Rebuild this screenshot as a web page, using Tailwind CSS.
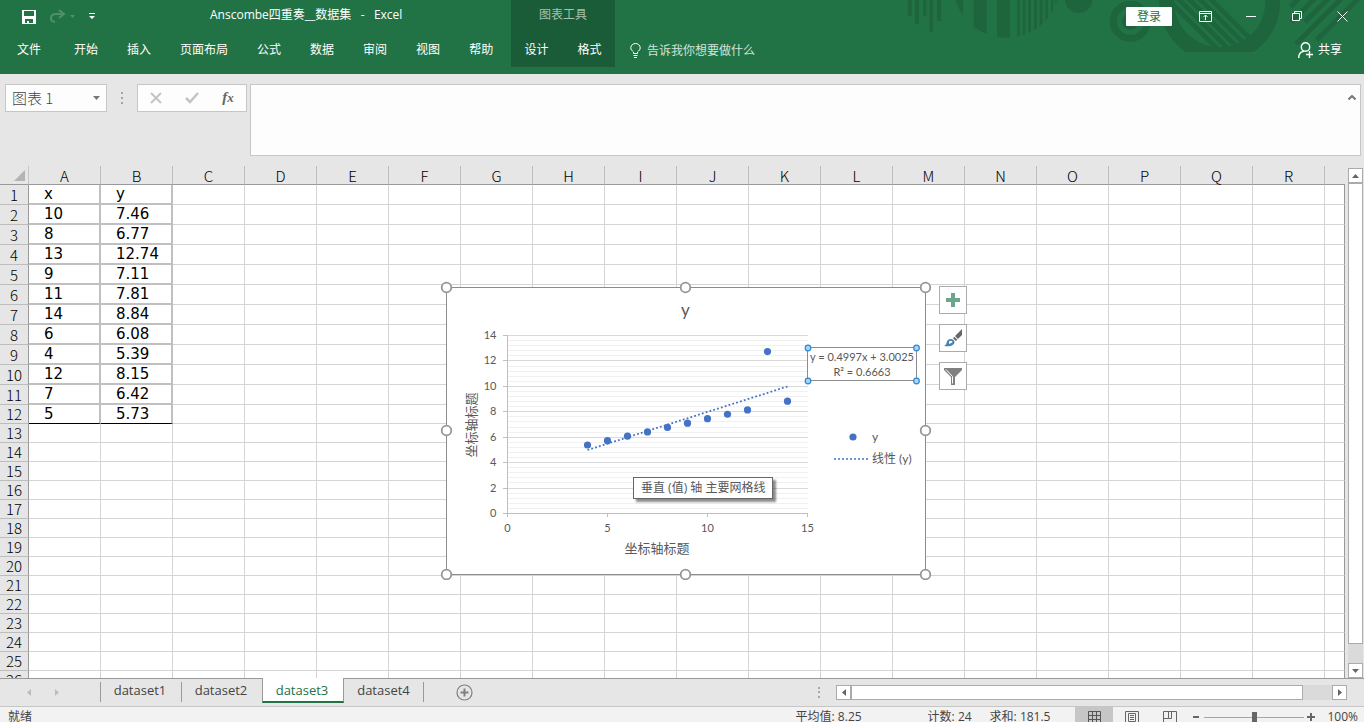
<!DOCTYPE html>
<html lang="zh-CN">
<head>
<meta charset="utf-8">
<title>Anscombe四重奏__数据集 - Excel</title>
<script src="https://cdn.jsdelivr.net/npm/@tailwindcss/browser@4"></script>
</head>
<body class="flex h-screen flex-col overflow-hidden bg-[#e6e6e6] font-['Open_Sans','Noto_Sans_CJK_SC',sans-serif] text-xs text-[#444]">

<header class="relative flex h-[74px] shrink-0 bg-[#217346] text-white">
  <svg class="absolute top-0 right-0 h-[74px] w-[464px]" viewBox="0 0 1392 222" fill="#1e643d" stroke="none" aria-hidden="true">
    <defs>
      <clipPath id="disc"><circle cx="319" cy="-46" r="159"/></clipPath>
      <clipPath id="inner"><circle cx="959" cy="5" r="137"/></clipPath>
      <clipPath id="cut"><rect x="700" y="0" width="500" height="156"/></clipPath>
    </defs>
    <path d="M24 0h11v48H24zM45 0h12v72H45zM69 0h10v49H69zM88 0h11v97H88zM111 0h12v62h-12z"/>
    <path clip-path="url(#disc)" d="M160 0h29v120h-29zM221 0h39v120h-39zM291 0h39v120h-39zM351 0h9v120h-9zM368 0h8v120h-8zM385 0h8v120h-8zM402 0h9v120h-9zM419 0h9v120h-9zM436 0h8v120h-8zM453 0h7v120h-7zM466 0h6v120h-6z"/>
    <circle cx="536" cy="-2" r="41"/>
    <circle cx="691" cy="64" r="51" fill="none" stroke="#1e643d" stroke-width="21"/>
    <circle cx="691" cy="64" r="25"/>
    <g clip-path="url(#cut)"><circle cx="959" cy="5" r="159" fill="none" stroke="#1e643d" stroke-width="45"/></g>
    <path clip-path="url(#inner)" fill="none" stroke="#1e643d" stroke-width="14" d="M915-20l170 170M882-20l170 170M850-20l170 170M818-20l170 170M785-20l170 170"/>
    <path fill="none" stroke="#1e643d" stroke-width="15" d="M1172 20l30-30M1174 66l76-76M1214 66l76-76M1188 132L1330-10M1250 120L1380-10"/>
  </svg>

  <div class="relative flex w-[511px] shrink-0 flex-col">
    <div class="flex h-8 items-center">
      <button class="ml-[21px]" aria-label="保存"><svg class="size-4" viewBox="0 0 16 16"><path fill="#fff" fill-rule="evenodd" d="M1 2h14v14H1zM3 3v5h10V3zM4 11v4h2v-2h2v2h4v-4z"/></svg></button>
      <button class="ml-3 flex items-center gap-1" aria-label="恢复"><svg class="h-4 w-[17px]" viewBox="0 0 17 16" fill="none" stroke="#4d9069" stroke-width="2"><path d="M10 2l5 4-5 4M15 6H7C1 6 0 13 6 14"/></svg><svg class="h-[3px] w-[5px]" viewBox="0 0 5 3" fill="#4d9069"><path d="M0 0h5L2.500 3z"/></svg></button>
      <button class="ml-3.5" aria-label="自定义快速访问工具栏"><svg class="h-[7px] w-[6px]" viewBox="0 0 6 7" fill="#fff"><path d="M0 0h6v1H0zM0 3h6L3 6z"/></svg></button>
      <h1 class="ml-[115px] whitespace-pre pb-0.5 text-xs">Anscombe四重奏__数据集   -   Excel</h1>
    </div>
    <nav class="flex h-[35px] items-center gap-[29px] pl-[17px]">
      <a href="#" class="mr-1">文件</a><a href="#">开始</a><a href="#">插入</a><a href="#">页面布局</a><a href="#">公式</a><a href="#">数据</a><a href="#">审阅</a><a href="#">视图</a><a href="#">帮助</a>
    </nav>
  </div>
  <div class="relative flex h-[67px] w-[104px] shrink-0 flex-col items-center bg-[#1b5c38]">
    <div class="flex h-8 items-center pb-0.5 text-[#a2c2af]">图表工具</div>
    <nav class="flex h-[35px] items-center gap-[29px]"><a href="#">设计</a><a href="#">格式</a></nav>
  </div>
  <div class="relative flex min-w-0 flex-1 flex-col">
    <div class="flex h-8 items-center justify-end">
      <button class="mr-2.5 h-[19px] w-[46px] rounded-[1px] bg-white leading-[19px] text-[#217346]">登录</button>
      <button class="flex w-[46px] justify-center" aria-label="功能区显示选项"><svg class="h-[11px] w-[13px]" viewBox="0 0 13 11" fill="none" stroke="#fff"><path d="M.5.5h12v10H.5zM.5 2.500h12M6.500 9V4M4.500 6l2-2 2 2"/></svg></button>
      <button class="flex w-[46px] justify-center" aria-label="最小化"><svg class="h-[11px] w-2.5" viewBox="0 0 10 11"><path fill="#fff" d="M0 5h10v1H0z"/></svg></button>
      <button class="flex w-[46px] justify-center" aria-label="还原"><svg class="size-2.5" viewBox="0 0 10 10" fill="none" stroke="#fff"><path d="M.5 2.500h7v7h-7zM2.500 2.500v-2h7v7h-2"/></svg></button>
      <button class="flex w-11 justify-center" aria-label="关闭"><svg class="size-[11px]" viewBox="0 0 11 11" stroke="#fff"><path d="M.5.5l10 10M10.500.5l-10 10"/></svg></button>
    </div>
    <div class="flex h-[35px] items-center justify-between pr-[22px] pl-[15px]">
      <button class="flex items-center gap-1.5 pt-0.5 text-[#d3e3da]"><svg class="h-[15px] w-[11px]" viewBox="0 0 11 15" fill="none" stroke="#fff"><path d="M3.500 10.500V9C2 7.500.8 6.800.8 4.800a4.700 4.300 0 0 1 9.400 0C10.200 6.800 9 7.500 7.500 9v1.500zM3.500 12.500h4M4 14.500h3"/></svg>告诉我你想要做什么</button>
      <button class="flex items-center gap-1"><svg class="size-4" viewBox="0 0 16 16" fill="none" stroke="#fff" stroke-width="1.400"><circle cx="7.500" cy="5" r="4.200"/><path d="M.7 16C.7 12 3 9.500 6 9.200M11.500 9v7M8 12.500h7"/></svg>共享</button>
    </div>
  </div>
</header>

<section class="flex h-[92px] shrink-0 items-start pt-2.5 pr-[3px] pl-[5px]">
  <div class="flex h-7 w-[102px] shrink-0 items-center border border-[#c6c6c6] bg-[#fdfdfd] pr-1.5">
    <input aria-label="名称框" value="图表 1" class="w-0 flex-1 pl-1.5 font-['Noto_Sans_CJK_SC',sans-serif] text-[15px] leading-5 font-light outline-none">
    <button aria-label="名称列表"><svg class="h-1 w-[7px]" viewBox="0 0 7 4" fill="#777"><path d="M0 0h7L3.500 4z"/></svg></button>
  </div>
  <svg class="mx-3.5 mt-2 h-3 w-0.5 shrink-0" viewBox="0 0 2 12" fill="#a6a6a6"><path d="M0 0h2v2H0zM0 5h2v2H0zM0 10h2v2H0z"/></svg>
  <div class="flex h-7 w-[110px] shrink-0 items-center border border-[#c6c6c6] bg-[#fdfdfd]">
    <button class="flex flex-1 justify-center" aria-label="取消"><svg class="size-3" viewBox="0 0 12 12" stroke="#c3c3c3" stroke-width="1.800"><path d="M1 1l10 10M11 1L1 11"/></svg></button>
    <button class="flex flex-1 justify-center" aria-label="输入"><svg class="h-3 w-3.5" viewBox="0 0 14 12" fill="none" stroke="#c3c3c3" stroke-width="2.500"><path d="M1 6l4 4 8-9"/></svg></button>
    <button class="flex-1 pb-0.5 font-['Liberation_Serif',serif] text-[15px] leading-5 font-bold text-[#666] italic" aria-label="插入函数">f<span class="text-[13px]">x</span></button>
  </div>
  <div class="ml-[3px] flex h-[72px] min-w-0 flex-1 border border-[#c6c6c6] bg-[#fdfdfd]">
    <textarea aria-label="编辑栏" class="min-w-0 flex-1 resize-none outline-none"></textarea>
    <button class="flex w-[18px] items-start pt-2.5 pl-1.5" aria-label="折叠编辑栏"><svg class="h-[5px] w-2" viewBox="0 0 8 5" fill="none" stroke="#777" stroke-width="2"><path d="M.5 4.500L4 1l3.500 3.500"/></svg></button>
  </div>
</section>

<main class="relative flex min-h-0 flex-1">
  <div class="min-w-0 flex-1 overflow-hidden">
    <table class="w-full table-fixed border-separate border-spacing-0">
      <thead class="font-['Noto_Sans_CJK_SC',sans-serif] text-[15px] leading-[18px] text-black"><tr id="cols"></tr></thead>
      <tbody id="rows"></tbody>
    </table>
  </div>
  <div class="flex w-[19px] shrink-0 flex-col pt-0.5 pr-px pl-[3px]">
    <button class="flex h-[15px] shrink-0 items-center justify-center border border-[#ababab] bg-white" aria-label="向上滚动"><svg class="h-1 w-[7px]" viewBox="0 0 7 4" fill="#666"><path d="M0 4h7L3.500 0z"/></svg></button>
    <div class="flex flex-1 flex-col bg-[#dadada]"><div class="h-[461px] border border-[#ababab] bg-white"></div></div>
    <button class="flex h-[15px] shrink-0 items-center justify-center border border-[#ababab] bg-white" aria-label="向下滚动"><svg class="h-1 w-[7px]" viewBox="0 0 7 4" fill="#666"><path d="M0 0h7L3.500 4z"/></svg></button>
  </div>

  <svg id="chart" class="absolute top-[114px] left-[440px] h-[300px] w-[492px] font-['Lato','Noto_Sans_CJK_SC',sans-serif]" viewBox="440 280 492 300" fill="#595959" role="img" aria-label="散点图 y">
    <rect x="446.500" y="287.500" width="479" height="287" fill="#fff" stroke="#8c8c8c"/>
    <g id="grid" shape-rendering="crispEdges"></g>
    <text x="685.500" y="316" font-size="17" text-anchor="middle">y</text>
    <g id="labels" font-size="11"></g>
    <text x="657" y="553" font-size="13" text-anchor="middle">坐标轴标题</text>
    <text transform="translate(476 425) rotate(-90)" font-size="13" text-anchor="middle">坐标轴标题</text>
    <path d="M587.500 450L787.500 386.500" stroke="#4472c4" stroke-width="1.800" stroke-dasharray="1.800 2.200"/>
    <g id="dots" fill="#4472c4"></g>
    <circle cx="853" cy="437" r="3.600" fill="#4472c4"/>
    <path d="M834 459h34" stroke="#4472c4" stroke-width="1.600" stroke-dasharray="2 2"/>
    <text x="872" y="441" font-size="12">y</text>
    <text x="872" y="463" font-size="12">线性 (y)</text>
    <rect x="807.500" y="347.500" width="109" height="33" fill="#fff" stroke="#8c8c8c"/>
    <text x="862" y="361" font-size="11" text-anchor="middle">y = 0.4997x + 3.0025</text>
    <text x="862" y="376" font-size="11" text-anchor="middle">R² = 0.6663</text>
    <g fill="#a8d4f5" stroke="#2b88d3" stroke-width="1.200"><circle cx="808" cy="348" r="2.800"/><circle cx="916.500" cy="348" r="2.800"/><circle cx="808" cy="381" r="2.800"/><circle cx="916.500" cy="381" r="2.800"/></g>
    <g fill="#fff" stroke="#969696" stroke-width="1.800"><circle cx="446.500" cy="287.500" r="4.800"/><circle cx="685.500" cy="287.500" r="4.800"/><circle cx="925.500" cy="287.500" r="4.800"/><circle cx="446.500" cy="430.500" r="4.800"/><circle cx="925.500" cy="430.500" r="4.800"/><circle cx="446.500" cy="574.500" r="4.800"/><circle cx="685.500" cy="574.500" r="4.800"/><circle cx="925.500" cy="574.500" r="4.800"/></g>
  </svg>
  <div role="tooltip" class="absolute top-[311px] left-[633px] h-[22px] border border-[#666] bg-white px-[7px] leading-5 whitespace-nowrap text-[#575757] shadow-[3px_3px_2px_rgba(0,0,0,0.45)]">垂直 (值) 轴 主要网格线</div>
  <div class="absolute top-[120px] left-[939px] flex flex-col gap-2.5">
    <button class="flex size-7 items-center justify-center border border-[#ababab] bg-white" aria-label="图表元素"><svg class="size-3.5" viewBox="0 0 14 14" fill="#6aa58c"><path d="M5 0h4v5h5v4H9v5H5V9H0V5h5z"/></svg></button>
    <button class="flex size-7 items-center justify-center border border-[#ababab] bg-white" aria-label="图表样式"><svg class="size-[18px]" viewBox="0 0 18 18"><path fill="#666" d="M18 0v6l-4 4-3-3zM10.300 7.700l3 3-1.500 1.300-2.800-2.800z"/><path fill="#4682b4" d="M0 17c3-1 2-4 4-6 1.500-1.500 4-1.500 5.500 0s1.300 3.500-.5 4.700C7 17.500 3 17.500 0 17z"/><path fill="#fff" d="M5 12.500c1-1 3-.8 3.500.2.300 1-1 .8-1.500 1.300-.7.700-1 1-2 .7z"/></svg></button>
    <button class="flex size-7 items-center justify-center border border-[#ababab] bg-white" aria-label="图表筛选器"><svg class="h-[17px] w-[18px]" viewBox="0 0 18 17"><path fill="#808080" d="M0 0h18v2l-7 7v8H7V9L0 2z"/><path fill="none" stroke="#fff" d="M2 1.500l6.500 7V15.500"/></svg></button>
  </div>
</main>

<footer class="shrink-0">
  <div class="flex h-7 border-t border-[#999]">
    <div class="flex w-[100px] shrink-0 items-center gap-6 pl-[27px]">
      <button aria-label="上一工作表"><svg class="h-[7px] w-1" viewBox="0 0 4 7" fill="#bcbcbc"><path d="M4 0v7L0 3.500z"/></svg></button>
      <button aria-label="下一工作表"><svg class="h-[7px] w-1" viewBox="0 0 4 7" fill="#bcbcbc"><path d="M0 0v7l4-3.500z"/></svg></button>
    </div>
    <div class="flex shrink-0 text-[13px]">
      <button class="mt-[3px] h-5 w-[81px] border-l border-[#999] pr-0.5 pb-1 leading-4">dataset1</button>
      <button class="mt-[3px] h-5 w-[81px] border-l border-[#999] pr-0.5 pb-1 leading-4">dataset2</button>
      <button class="-mt-px h-[25px] w-[82px] border-x border-b-2 border-x-[#999] border-b-[#217346] bg-white pt-0.5 pr-0.5 text-[#217346]">dataset3</button>
      <button class="mt-[3px] h-5 w-20 border-r border-[#999] pb-1 leading-4">dataset4</button>
    </div>
    <button class="ml-8 shrink-0" aria-label="新工作表"><svg class="size-[17px]" viewBox="0 0 17 17" fill="none" stroke="#808080"><circle cx="8.500" cy="8.500" r="7.500" stroke-width="1.200"/><path stroke-width="2" d="M8.500 4.500v8M4.500 8.500h8"/></svg></button>
    <div class="ml-auto flex items-start pt-1.5 pr-[17px]">
      <svg class="mt-0.5 mr-4 h-[11px] w-0.5" viewBox="0 0 2 11" fill="#a6a6a6"><path d="M0 0h2v2H0zM0 4h2v2H0zM0 9h2v2H0z"/></svg>
      <button class="flex h-[15px] w-[15px] items-center justify-center border border-[#ababab] bg-white" aria-label="向左滚动"><svg class="h-[7px] w-1" viewBox="0 0 4 7" fill="#666"><path d="M4 0v7L0 3.500z"/></svg></button>
      <div class="flex h-[15px] bg-[#dadada]"><div class="mr-[29px] w-[452px] border border-[#ababab] bg-white"></div></div>
      <button class="flex h-[15px] w-[15px] items-center justify-center border border-[#ababab] bg-white" aria-label="向右滚动"><svg class="h-[7px] w-1" viewBox="0 0 4 7" fill="#666"><path d="M0 0v7l4-3.500z"/></svg></button>
    </div>
  </div>
  <div class="flex h-4 items-start overflow-hidden border-t border-[#c6c6c6] bg-[#f2f2f2] leading-5">
    <span class="pl-2">就绪</span>
    <span class="ml-auto">平均值: 8.25</span>
    <span class="ml-[66px]">计数: 24</span>
    <span class="ml-[18px]">求和: 181.5</span>
    <button class="ml-[25px] flex h-5 w-[38px] shrink-0 items-center justify-center bg-[#c6c6c6]" aria-label="普通"><svg class="size-[13px]" viewBox="0 0 13 13" fill="none" stroke="#555"><path d="M.5.5h12v12H.5zM4.500 0v13M8.500 0v13M0 4.500h13M0 8.500h13"/></svg></button>
    <button class="flex h-5 w-[38px] shrink-0 items-center justify-center" aria-label="页面布局"><svg class="h-[13px] w-3.5" viewBox="0 0 14 13" fill="none" stroke="#666"><path d="M.5.5h13v12H.5zM3.500 2.500h7v8h-7zM5 4.500h4M5 6.500h4M5 8.500h4"/></svg></button>
    <button class="flex h-5 w-[38px] shrink-0 items-center justify-center" aria-label="分页预览"><svg class="h-[13px] w-3.5" viewBox="0 0 14 13" fill="none" stroke="#666"><path d="M.5 12.500V.5h13v12M5.500.5v7h-5M8.500.5v7h-3M.5 12.500h13"/></svg></button>
    <button class="ml-1 flex h-5 w-2 items-center" aria-label="缩小"><svg class="h-[7px] w-1.5" viewBox="0 0 6 7" fill="#666"><path d="M0 2h6v2H0z"/></svg></button>
    <input type="range" aria-label="缩放" min="10" max="190" value="100" class="mx-[3px] mt-2.5 h-px w-[100px] appearance-none bg-[#a6a6a6] [&::-webkit-slider-thumb]:h-3 [&::-webkit-slider-thumb]:w-[5px] [&::-webkit-slider-thumb]:appearance-none [&::-webkit-slider-thumb]:bg-[#666]">
    <button class="flex h-5 w-2 items-center" aria-label="放大"><svg class="size-2" viewBox="0 0 8 8" fill="#666"><path d="M3 0h2v3h3v2H5v3H3V5H0V3h3z"/></svg></button>
    <span class="mr-1.5 ml-3">100%</span>
  </div>
</footer>

<script>
const data = [['x','y'],[10,7.46],[8,6.77],[13,12.74],[9,7.11],[11,7.81],[14,8.84],[6,6.08],[4,5.39],[12,8.15],[7,6.42],[5,5.73]];
const letters = 'ABCDEFGHIJKLMNOPQR'.split('');

let head = '<th class="h-[19px] w-[29px] border-r border-b border-r-[#c6c6c6] border-b-[#999] p-0"><svg class="ml-3.5 size-[11px]" viewBox="0 0 11 11" fill="#b4b4b4"><path d="M11 0v11H0z"/></svg></th>';
for (const l of letters) head += '<th scope="col" class="h-[19px] w-[72px] border-r border-b border-r-[#bdbdbd] border-b-[#999] p-0 font-light"><div class="h-[18px] pt-px">' + l + '</div></th>';
head += '<th class="border-b border-[#999] p-0"></th>';
document.getElementById('cols').innerHTML = head;

let body = '';
for (let r = 1; r <= 26; r++) {
  const h = r < 12 ? 'h-5' : 'h-[19px]';
  body += `<tr class="${h}"><th scope="row" class="border-r border-b border-r-[#999] border-b-[#bdbdbd] p-0 font-['Noto_Sans_CJK_SC',sans-serif] text-[15px] leading-[18px] font-light text-black"><div class="h-[18px]">${r}</div></th>`;
  for (let c = 0; c < 18; c++) {
    if (c < 2 && r <= 12) {
      const edge = r < 12 ? 'border-b-2 border-b-[#c0c0c0]' : 'border-b border-b-black';
      body += `<td class="${edge} border-r-2 border-r-[#c0c0c0] bg-white py-0 pr-0 pl-[15px] font-['DejaVu_Sans',sans-serif] text-[15px] leading-[18px] text-black">${data[r - 1][c]}</td>`;
    } else {
      body += '<td class="border-r border-b border-[#d4d4d4] bg-white p-0"></td>';
    }
  }
  body += '<td class="border-r border-b border-r-[#999] border-b-[#d4d4d4] bg-white p-0"></td></tr>';
}
document.getElementById('rows').innerHTML = body;

const px = x => 507.5 + 20 * x, py = y => 513.5 - 12.71 * y;
let grid = '', labels = '', dots = '';
for (let i = 1; i <= 35; i++) {
  const y = Math.floor(py(i * 0.4)) + 0.5, major = i % 5 === 0;
  grid += '<path stroke="' + (major ? '#d9d9d9' : '#f0f0f0') + '" d="M508 ' + y + 'H808"/>';
}
grid += '<path fill="none" stroke="#bfbfbf" d="M507.500 335V513.500H808';
for (let v = 0; v <= 14; v += 2) {
  const y = Math.floor(py(v)) + 0.5;
  grid += 'M503 ' + y + 'H508';
  labels += '<text x="496.500" y="' + (y + 3.5) + '" text-anchor="end">' + v + '</text>';
}
for (let v = 0; v <= 15; v += 5) {
  grid += 'M' + px(v) + ' 513V517';
  labels += '<text x="' + px(v) + '" y="532" text-anchor="middle">' + v + '</text>';
}
grid += '"/>';
for (const [x, y] of data.slice(1)) dots += '<circle cx="' + px(x) + '" cy="' + py(y) + '" r="3.600"/>';
document.getElementById('grid').innerHTML = grid;
document.getElementById('labels').innerHTML = labels;
document.getElementById('dots').innerHTML = dots;
</script>
</body>
</html>
